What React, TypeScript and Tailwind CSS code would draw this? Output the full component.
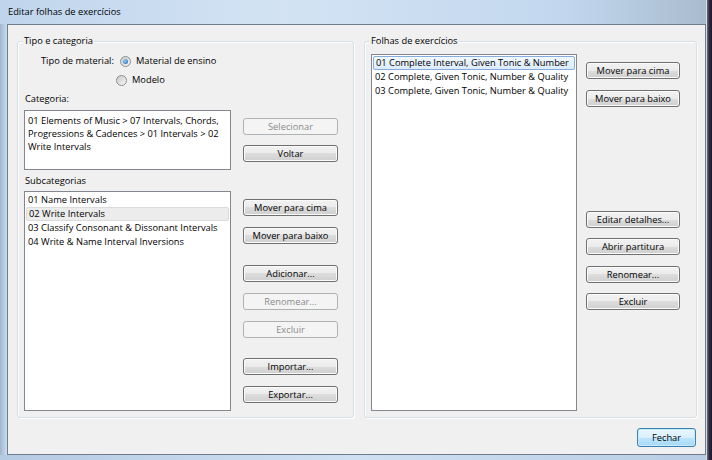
import { ReactNode } from 'react'

function Btn({
  children,
  disabled,
  className
}: {
  children: ReactNode
  disabled?: boolean
  className?: string
}) {
  return (
    <div
      className={`h-[17px] flex items-center justify-center rounded-[3px] border leading-none ${
        disabled
          ? 'border-[#adb2b5] bg-[#f4f4f4] text-[#8a8a8a]'
          : 'border-[#707070] bg-[linear-gradient(#f2f2f2_0%,#ebebeb_50%,#dddddd_50%,#cfcfcf_100%)] text-black shadow-[inset_0_0_0_1px_#fbfbfb]'
      } ${className ?? ''}`}
    >
      {children}
    </div>
  )
}

function Radio({ checked }: { checked?: boolean }) {
  return (
    <div className="w-[11px] h-[11px] rounded-full border border-[#8e8f8f] bg-[linear-gradient(135deg,#c9c9c9,#f7f7f7)] flex items-center justify-center">
      {checked && (
        <div className="w-[5px] h-[5px] rounded-full bg-[radial-gradient(circle_at_35%_35%,#8fd0ff,#1c5fa8)]" />
      )}
    </div>
  )
}

function Group({
  title,
  className,
  children
}: {
  title: string
  className?: string
  children: ReactNode
}) {
  return (
    <div
      className={`relative h-[377px] rounded-[3px] border border-[#d5dfe5] shadow-[inset_1px_1px_0_#ffffff,1px_1px_0_#ffffff] ${className ?? ''}`}
    >
      <div className="absolute -top-[8px] left-[5px] bg-[#f0f0f0] px-[1px] leading-[14px]">
        {title}
      </div>
      {children}
    </div>
  )
}

const subcategorias = [
  '01 Name Intervals',
  '02 Write Intervals',
  '03 Classify Consonant & Dissonant Intervals',
  '04 Write & Name Interval Inversions'
]

const folhas = [
  '01 Complete Interval, Given Tonic & Number',
  '02 Complete, Given Tonic, Number & Quality',
  '03 Complete, Given Tonic, Number & Quality'
]

export default function App() {
  return (
    <div className="w-[712px] h-[460px] flex overflow-hidden bg-[#c4d9ef] text-[9.3px] text-black font-['Open_Sans','Noto_Sans',sans-serif]">
      <div className="flex flex-col w-[706px]">
        {/* barra de título */}
        <div className="h-[24px] pl-[8px] flex items-center bg-[linear-gradient(90deg,#c0d5ec_0%,#d3e3f4_40%,#c2d7ee_80%,#a9bccf_100%)]">
          Editar folhas de exercícios
        </div>
        <div className="flex h-[431px]">
          <div className="w-[7px] bg-[linear-gradient(90deg,#9fb6cf,#c9dcf0)]" />
          <div className="w-[699px] border border-[#6d7c8c] bg-[#f0f0f0] pl-[9px] pt-[16px]">
            <div className="flex">
              <Group title="Tipo e categoria" className="w-[337px]">
                <div className="pt-[12px] pl-[6px]">
                  <div className="h-[14px] flex items-center pl-[17px]">
                    <span>Tipo de material:</span>
                    <div className="ml-[6px]">
                      <Radio checked />
                    </div>
                    <span className="ml-[5px]">Material de ensino</span>
                  </div>
                  <div className="h-[14px] mt-[5px] flex items-center pl-[92px]">
                    <Radio />
                    <span className="ml-[5px]">Modelo</span>
                  </div>
                  <div className="h-[14px] mt-[5px] flex items-center pl-[1px]">
                    Categoria:
                  </div>
                  <div className="flex mt-[4px]">
                    <div className="w-[207px] h-[60px] border border-[#828790] bg-white pt-[3px] pl-[3px] leading-[13px]">
                      01 Elements of Music &gt; 07 Intervals, Chords,
                      <br />
                      Progressions &amp; Cadences &gt; 01 Intervals &gt; 02
                      <br />
                      Write Intervals
                    </div>
                    <div className="ml-[12px] mt-[8px] flex flex-col">
                      <Btn disabled className="w-[95px]">
                        Selecionar
                      </Btn>
                      <Btn className="w-[95px] mt-[10px]">Voltar</Btn>
                    </div>
                  </div>
                  <div className="h-[14px] mt-[4px] flex items-center pl-[1px]">
                    Subcategorias
                  </div>
                  <div className="flex mt-[3px]">
                    <div className="w-[207px] h-[220px] border border-[#828790] bg-white pt-[1px] px-[1px]">
                      {subcategorias.map((s, i) => (
                        <div
                          key={i}
                          className={`h-[14px] flex items-center pl-[2px] rounded-[2px] ${
                            i === 1
                              ? 'bg-[#ececec] border border-[#dadada] pl-[1px]'
                              : ''
                          }`}
                        >
                          {s}
                        </div>
                      ))}
                    </div>
                    <div className="ml-[12px] mt-[8px] flex flex-col">
                      <Btn className="w-[95px]">Mover para cima</Btn>
                      <Btn className="w-[95px] mt-[11px]">Mover para baixo</Btn>
                      <Btn className="w-[95px] mt-[21px]">Adicionar...</Btn>
                      <Btn disabled className="w-[95px] mt-[11px]">
                        Renomear...
                      </Btn>
                      <Btn disabled className="w-[95px] mt-[11px]">
                        Excluir
                      </Btn>
                      <Btn className="w-[95px] mt-[20px]">Importar...</Btn>
                      <Btn className="w-[95px] mt-[11px]">Exportar...</Btn>
                    </div>
                  </div>
                </div>
              </Group>

              <Group title="Folhas de exercícios" className="w-[333px] ml-[10px]">
                <div className="flex pt-[12px] pl-[6px]">
                  <div className="w-[206px] h-[357px] border border-[#828790] bg-white pt-[1px] px-[1px]">
                    {folhas.map((f, i) => (
                      <div
                        key={i}
                        className={`h-[14px] flex items-center pl-[2px] rounded-[2px] ${
                          i === 0
                            ? 'border border-[#84acdd] bg-[linear-gradient(#f2f8fe,#dcebfc)] pl-[1px]'
                            : ''
                        }`}
                      >
                        {f}
                      </div>
                    ))}
                  </div>
                  <div className="ml-[9px] mt-[8px] flex flex-col">
                    <Btn className="w-[94px]">Mover para cima</Btn>
                    <Btn className="w-[94px] mt-[11px]">Mover para baixo</Btn>
                    <Btn className="w-[94px] mt-[104px]">Editar detalhes...</Btn>
                    <Btn className="w-[94px] mt-[10px]">Abrir partitura</Btn>
                    <Btn className="w-[94px] mt-[11px]">Renomear...</Btn>
                    <Btn className="w-[94px] mt-[10px]">Excluir</Btn>
                  </div>
                </div>
              </Group>
            </div>
            <div className="w-[680px] flex justify-end mt-[10px] pr-[1px]">
              <div className="w-[59px] h-[19px] flex items-center justify-center rounded-[3px] border border-[#3c7fb1] bg-[linear-gradient(#eaf6fd_0%,#d9f0fc_50%,#bee6fd_50%,#a7d9f5_100%)] shadow-[inset_0_0_0_1px_#c6ecfc] leading-none">
                Fechar
              </div>
            </div>
          </div>
        </div>
        <div className="h-[5px] bg-[linear-gradient(90deg,#b5cbe3,#cfe0f2_50%,#b8cde4)]" />
      </div>
      <div className="w-[6px] border-l border-[#d8dde3] bg-[linear-gradient(90deg,#6b6f7a,#2b2740_50%,#1d1a2c)]" />
    </div>
  )
}
